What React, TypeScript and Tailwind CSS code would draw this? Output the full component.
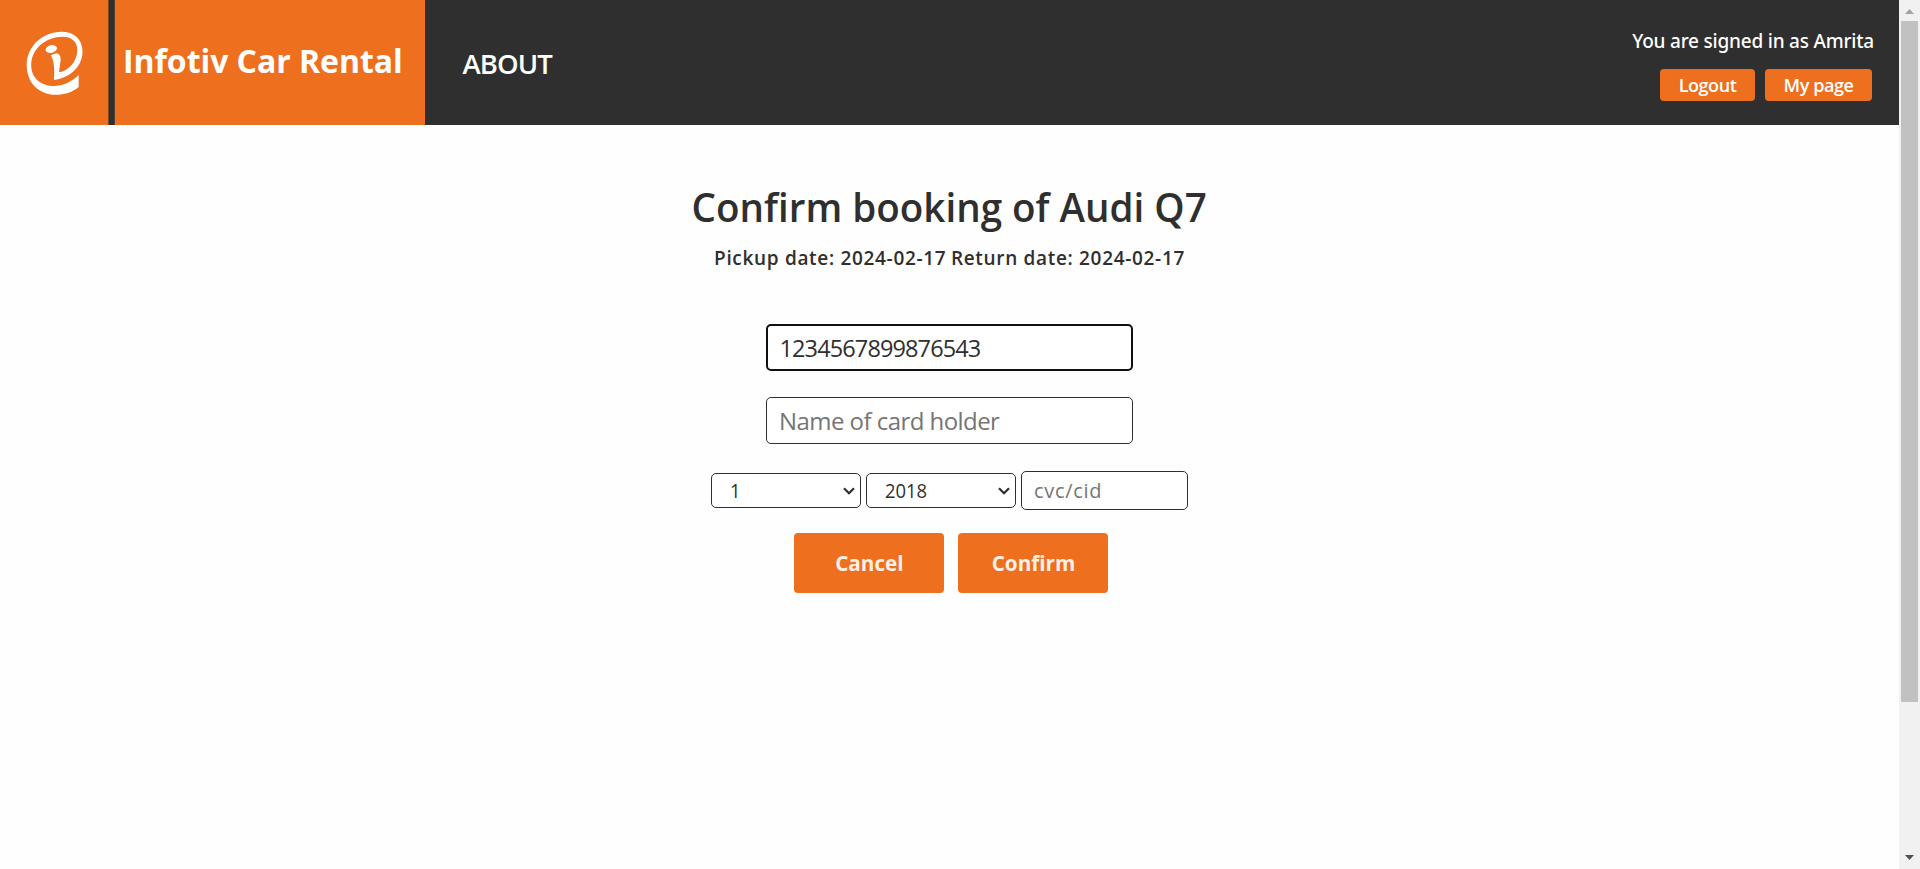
function Logo() {
  return (
    <svg viewBox="0 0 108 125" className="h-[125px] w-[108px]" fill="#fff">
      <path d="M78.7 75V87C72 92.5 64 94.8 56 94.8C38 94.8 26.7 82 26.7 65C26.7 46 43 31.7 61.5 31.7C74 31.7 82.5 39 82.5 51.5C82.5 66 71 77.5 54 80C54.5 70 54.5 61 50.7 55.3L56 53.3C60 53.5 61 57 60.5 61L59 72.3C69 71 77.3 61 77.3 50C77.3 41.5 71.5 36.8 62.5 36.8C46 36.8 31.2 49 31.2 65C31.2 78 41 86 54 86C63 86 71 82 78.7 75Z" />
      <ellipse cx="51.3" cy="49" rx="5.8" ry="3.8" transform="rotate(-14 51.3 49)" />
    </svg>
  );
}

function Header() {
  return (
    <header className="flex h-[125px] items-stretch bg-[#2f2f2f] text-white">
      <div className="w-[108px] bg-[#ee6f1e]">
        <Logo />
      </div>
      <div className="w-[7px] border-x border-l-[#85491f] border-r-[#554030] bg-[#2f2f2f]" />
      <h1 className="flex w-[310px] items-center bg-[#ee6f1e] pb-1 pl-2 text-[32px] font-bold tracking-[-0.05px] whitespace-nowrap">
        Infotiv Car Rental
      </h1>
      <a className="ml-[37.5px] flex items-center pt-[3px] text-[27.5px] font-semibold tracking-[-0.9px]">ABOUT</a>
      <div className="ml-auto flex flex-col items-end pt-[29px] pr-[25px]">
        <p className="font-['Noto_Sans','Open_Sans',sans-serif] text-[19px] leading-6 font-medium tracking-[-0.21px] whitespace-nowrap">You are signed in as Amrita</p>
        <div className="mt-4 mr-[2px] flex gap-[10px]">
          <button className="h-8 w-[95px] rounded bg-[#ee6f1e] text-[18px] font-semibold tracking-[-0.43px]">Logout</button>
          <button className="h-8 w-[107px] rounded bg-[#ee6f1e] text-[18px] font-semibold tracking-[-0.43px]">My page</button>
        </div>
      </div>
    </header>
  );
}

function Select({ value }: { value: string }) {
  return (
    <div className="flex h-[35px] w-[150px] items-center justify-between rounded-[5px] border border-[#2f2f2f] bg-white pr-[5px] pl-[17.5px] text-[20px]">
      <span className="origin-left scale-x-[0.92]">{value}</span>
      <svg viewBox="0 0 12 8" className="h-2 w-3" fill="none" stroke="#2f2f2f" strokeWidth="2.2">
        <path d="M1 1.2L6 6.2L11 1.2" />
      </svg>
    </div>
  );
}

function Action({ label }: { label: string }) {
  return (
    <button className="h-[60px] w-[150px] rounded bg-[#ee6f1e] pb-[2px] text-[22px] font-bold text-[#fdf0e8]">
      <span className="inline-block scale-x-[0.94]">{label}</span>
    </button>
  );
}

function Scrollbar() {
  return (
    <div className="flex h-full w-[21px] flex-col items-center bg-[#f1f1f1]">
      <div className="flex h-[21px] items-center pt-[2px]">
        <svg viewBox="0 0 9 5" className="h-[5px] w-[9px]" fill="#a3a3a3">
          <path d="M0 5L4.5 0L9 5Z" />
        </svg>
      </div>
      <div className="mr-px h-[681px] w-[17px] bg-[#c1c1c1]" />
      <div className="mt-auto flex h-[21px] items-center">
        <svg viewBox="0 0 9 5" className="mb-[2px] h-[5px] w-[9px]" fill="#505050">
          <path d="M0 0L4.5 5L9 0Z" />
        </svg>
      </div>
    </div>
  );
}

export default function App() {
  return (
    <div className="flex h-[869px] w-[1920px] overflow-hidden bg-[#fefefe] font-['Open_Sans','Noto_Sans',sans-serif] text-[#2f2f2f]">
      <div className="flex-1">
        <Header />
        <main className="flex flex-col items-center pt-[58px]">
          <h2 className="scale-x-[0.964] text-[40px] leading-[48px] font-semibold whitespace-nowrap">
            Confirm booking of Audi Q7
          </h2>
          <div className="mt-[15px] flex gap-[4.5px] text-[19px] leading-6 font-semibold tracking-[0.68px] whitespace-nowrap">
            <span>Pickup date: 2024-02-17</span>
            <span>Return date: 2024-02-17</span>
          </div>
          <input
            className="mt-[54px] h-[47px] w-[367px] rounded-[5px] border-2 border-[#101010] bg-white pl-[11.5px] text-[23.5px] tracking-[-0.88px] outline-none"
            defaultValue="1234567899876543"
          />
          <input
            className="mt-[26px] h-[47px] w-[367px] rounded-[5px] border border-[#2f2f2f] bg-white pl-3 text-[24px] tracking-[-0.55px] outline-none placeholder:text-[#757575]"
            placeholder="Name of card holder"
          />
          <div className="mt-[27px] flex items-center gap-[5px]">
            <Select value="1" />
            <Select value="2018" />
            <input
              className="h-[39px] w-[167px] rounded-[5px] border border-[#2f2f2f] bg-white pl-3 text-[20px] tracking-[0.7px] outline-none placeholder:text-[#757575]"
              placeholder="cvc/cid"
            />
          </div>
          <div className="mt-[23px] ml-[3px] flex gap-[14px]">
            <Action label="Cancel" />
            <Action label="Confirm" />
          </div>
        </main>
      </div>
      <Scrollbar />
    </div>
  );
}
